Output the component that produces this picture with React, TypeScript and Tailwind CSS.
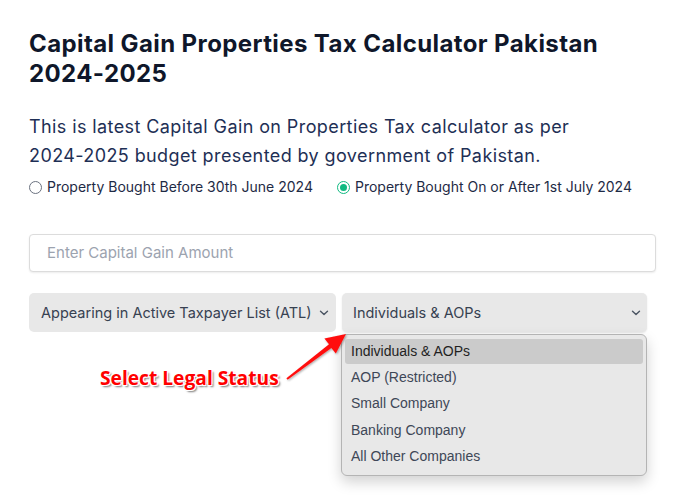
import React from "react";

function Chevron() {
  return (
    <svg width="10" height="6" viewBox="0 0 10 6" fill="none" className="shrink-0">
      <path d="M1.5 1.2 L5 4.6 L8.5 1.2" stroke="#4b5563" strokeWidth="1.4" strokeLinecap="round" strokeLinejoin="round" />
    </svg>
  );
}

export default function App() {
  const options = ["Individuals & AOPs", "AOP (Restricted)", "Small Company", "Banking Company", "All Other Companies"];
  return (
    <div className="relative min-h-[497px] w-[683px] bg-white font-['Inter',sans-serif]">
      <div className="flex flex-col pl-[29px] pr-[28px] pt-[29px]">
        <h1 className="text-[24px] font-bold leading-[30px] tracking-[0.4px] text-[#0f172a]">
          Capital Gain Properties Tax Calculator Pakistan
          <br />
          2024-2025
        </h1>
        <p className="mt-[23px] text-[18px] leading-[29px] tracking-[0.4px] text-[#1e2f55]">
          This is latest Capital Gain on Properties Tax calculator as per
          <br />
          2024-2025 budget presented by government of Pakistan.
        </p>
        <div className="mt-[6px] flex items-center text-[14px] leading-[22px] text-[#1e2a45]">
          <label className="flex items-center gap-[5px]">
            <span className="h-[13px] w-[13px] rounded-full border border-[#6b7280] bg-white" />
            <span>Property Bought Before 30th June 2024</span>
          </label>
          <label className="ml-[24px] flex items-center gap-[5px]">
            <span className="flex h-[13px] w-[13px] items-center justify-center rounded-full border-[1.5px] border-[#10b981] bg-white">
              <span className="h-[7px] w-[7px] rounded-full bg-[#10b981]" />
            </span>
            <span>Property Bought On or After 1st July 2024</span>
          </label>
        </div>
        <div className="mt-[36px] flex h-[38px] w-[627px] items-center rounded-[4px] border border-[#dcdcdc] bg-white pl-[17px] shadow-[0_1px_2px_rgba(0,0,0,0.08)]">
          <span className="text-[15px] text-[#9ca3af]">Enter Capital Gain Amount</span>
        </div>
        <div className="mt-[21px] flex gap-[6px]">
          <div className="flex h-[39px] w-[307px] items-center justify-between rounded-[5px] bg-[#e8e8e8] pl-[12px] pr-[7px] text-[14.5px] text-[#374151]">
            <span>Appearing in Active Taxpayer List (ATL)</span>
            <Chevron />
          </div>
          <div className="relative flex h-[39px] w-[305px] items-center justify-between rounded-[5px] bg-[#e8e8e8] pl-[11px] pr-[6px] text-[14.5px] text-[#374151] shadow-[0_1px_2px_rgba(0,0,0,0.1)]">
            <span>Individuals &amp; AOPs</span>
            <Chevron />
            <div className="absolute left-[-1px] top-[41px] z-10 flex w-[306px] flex-col rounded-[6px] border border-[#b4b4b4] bg-[#e8e8e8] px-[3px] pb-[5px] pt-[4px] font-['Liberation_Sans',Arial,sans-serif] text-[14px] shadow-[0_6px_14px_rgba(0,0,0,0.18)]">
              {options.map((o, i) => (
                <div
                  key={o}
                  className={
                    i === 0
                      ? "flex h-[25px] items-center rounded-[3px] bg-[#cbcbcb] px-[6px] text-[#1f1f1f]"
                      : "flex h-[26.5px] items-center px-[6px] text-[#3e4757]"
                  }
                >
                  {o}
                </div>
              ))}
            </div>
          </div>
        </div>
      </div>
      <div className="absolute left-[100px] top-[364px] font-['Open_Sans',sans-serif] text-[19.2px] font-bold leading-[28px] text-[#ff0000] [text-shadow:-1px_-1px_0_#fff,1px_-1px_0_#fff,-1px_1px_0_#fff,1px_1px_0_#fff,2px_2px_2px_#777]">
        Select Legal Status
      </div>
      <svg className="pointer-events-none absolute left-0 top-0 z-20" width="683" height="497" viewBox="0 0 683 497">
        <defs>
          <filter id="sh" x="-20%" y="-20%" width="140%" height="140%">
            <feDropShadow dx="1" dy="1" stdDeviation="1" floodColor="#000" floodOpacity="0.35" />
          </filter>
        </defs>
        <path
          d="M286.4 378.2 L329 344.3 L324.4 338.6 L346 334 L335.8 353.6 L331.4 348 L287.6 379.8 Z"
          fill="#ff1010"
          filter="url(#sh)"
        />
      </svg>
    </div>
  );
}
